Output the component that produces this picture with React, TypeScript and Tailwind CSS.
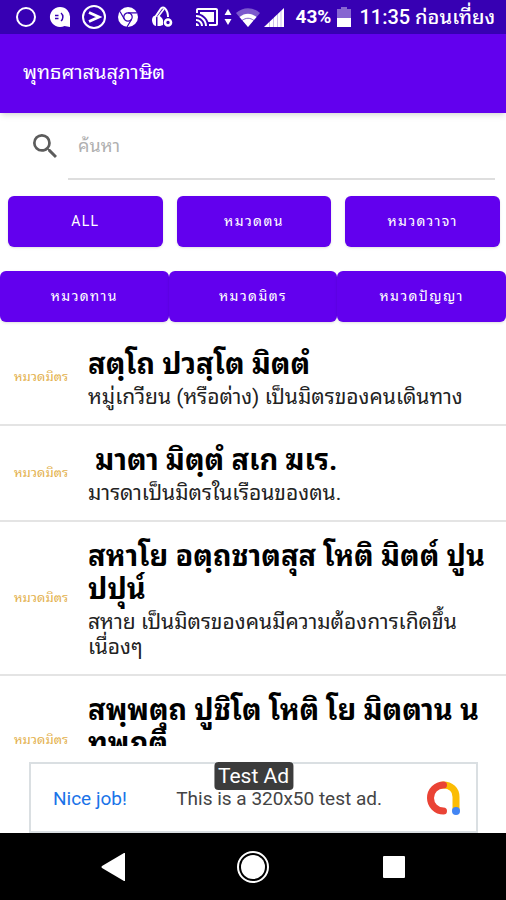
import * as React from "react";

interface Proverb {
  category: string;
  title: string;
  meaning: string;
}

const proverbs: Proverb[] = [
  {
    category: "หมวดมิตร",
    title: "สตฺโถ ปวสฺโต มิตตํ",
    meaning: "หมู่เกวียน (หรือต่าง) เป็นมิตรของคนเดินทาง",
  },
  {
    category: "หมวดมิตร",
    title: " มาตา มิตฺตํ สเก ฆเร.",
    meaning: "มารดาเป็นมิตรในเรือนของตน.",
  },
  {
    category: "หมวดมิตร",
    title: "สหาโย อตฺถชาตสุส โหติ มิตต์ ปูน\nปปุน์",
    meaning: "สหาย เป็นมิตรของคนมีความต้องการเกิดขึ้น\nเนื่องๆ",
  },
  {
    category: "หมวดมิตร",
    title: "สพฺพตุถ ปูชิโต โหติ โย มิตตาน น\nทุพภติ",
    meaning: "",
  },
];

function StatusBar() {
  return (
    <div className="flex h-[34px] shrink-0 items-center justify-between bg-[#3700b3] pl-3.5 pr-[11px] text-white">
      <div className="flex items-center gap-2.5">
        <svg className="size-6" viewBox="0 0 24 24" fill="none" stroke="currentColor" strokeWidth="2">
          <circle cx="12" cy="12" r="9" />
        </svg>
        <svg className="size-6" viewBox="-1 -1 24 24" fill="currentColor">
          <path d="M11 1a10 10 0 1 0 4.500 18.900L21 21v-9A10 10 0 0 0 11 1z" />
          <g fill="none" stroke="#3700b3" strokeWidth="1.500">
            <path d="M6 9.500h3.500M6 12.500h3.500M12 7c2.500 2 2.500 6 0 8" />
          </g>
        </svg>
        <svg className="size-6" viewBox="0 0 24 24" fill="none" stroke="currentColor">
          <circle cx="12" cy="12" r="11" strokeWidth="2" />
          <path d="M7 7.500l10 4.500-10 4.500" strokeWidth="2.800" />
        </svg>
        <svg className="size-6" viewBox="-1 -1 24 24">
          <circle cx="11" cy="11" r="10" fill="currentColor" />
          <g fill="none" stroke="#3700b3" strokeWidth="1.200">
            <circle cx="11" cy="11" r="4.200" />
            <path d="M11 6.800h9M7.400 13.200L3 5.500M14.600 13.200L10 21" />
          </g>
        </svg>
        <svg className="size-6" viewBox="-1 -1 24 24" fill="none" stroke="currentColor">
          <path d="M3.500 12L10 2.500q2-2 4 0 3 3 3 8.500" strokeWidth="2" />
          <path d="M7 11l6-8" strokeWidth="1.500" />
          <path d="M1 14c0-3 2-5 4-4v10c-2 0-4-3-4-6z" fill="currentColor" stroke="none" />
          <path d="M6.500 10c2-1 4 1 5.500 4v5c-2 1-4 1-5.500 1z" fill="currentColor" stroke="none" />
          <circle cx="17" cy="16.500" r="3" strokeWidth="2.600" />
        </svg>
      </div>
      <div className="flex items-center">
        <svg className="mr-1.5 h-[18px] w-[22px]" viewBox="1 3 22 18" fill="currentColor">
          <path d="M1 18v3h3c0-1.660-1.340-3-3-3zm0-4v2c2.760 0 5 2.240 5 5h2c0-3.870-3.130-7-7-7zm18-7H5v1.630c3.960 1.280 7.090 4.410 8.370 8.370H19V7zM1 10v2c4.970 0 9 4.030 9 9h2c0-6.080-4.930-11-11-11zm20-7H3c-1.100 0-2 .9-2 2v3h2V5h18v14h-7v2h7c1.100 0 2-.9 2-2V5c0-1.100-.9-2-2-2z" />
        </svg>
        <svg className="mr-1 h-4 w-2" viewBox="0 0 8 16" fill="currentColor">
          <path d="M4 0l3.500 6h-7zM4 16l3.500-6h-7z" />
        </svg>
        <svg className="mr-1 h-[19px] w-6" viewBox="0 0 24 19">
          <path d="M12 19L0 5C7-1.500 17-1.500 24 5z" fill="currentColor" opacity="0.35" />
          <path d="M12 19L3.500 9c5-4.500 12-4.500 17 0z" fill="currentColor" />
          <path d="M6 12.500c4-3 8-3 12 0" fill="none" stroke="#3700b3" strokeWidth="1" opacity="0.6" />
        </svg>
        <svg className="mr-3 h-[19px] w-5" viewBox="0 0 20 19">
          <path d="M20 0v19H0z" fill="currentColor" />
          <path d="M5.500 19v-6M9.500 19V9M13.500 19V5M17 19V2" stroke="#3700b3" strokeWidth="1" opacity="0.25" />
        </svg>
        <span className="mr-1.5 text-[19px] font-bold">43%</span>
        <svg className="mr-2 h-5 w-[14px]" viewBox="0 0 14 20" fill="currentColor">
          <path d="M4 0h6v2h4v9H0V2h4z" opacity="0.4" />
          <path d="M0 11h14v9H0z" />
        </svg>
        <span className="whitespace-nowrap text-[20px] font-medium leading-6">11:35 ก่อนเที่ยง</span>
      </div>
    </div>
  );
}

function SearchBox() {
  return (
    <div className="flex h-[67px] shrink-0 items-start pl-[33px] pr-[11px]">
      <label htmlFor="search" className="mr-[11px] mt-[21px]">
        <svg className="size-6" viewBox="3 3 17.500 17.500" fill="#5c5c5c">
          <path d="M15.500 14h-.79l-.28-.27A6.471 6.471 0 0 0 16 9.500 6.500 6.500 0 1 0 9.500 16c1.610 0 3.090-.59 4.230-1.570l.27.28v.79l5 4.990L20.490 19l-4.990-5zm-6 0C7.010 14 5 11.990 5 9.500S7.010 5 9.500 5 14 7.010 14 9.500 11.990 14 9.500 14z" />
        </svg>
      </label>
      <input
        id="search"
        type="search"
        aria-label="ค้นหา"
        placeholder="ค้นหา"
        className="h-[67px] min-w-0 flex-1 border-b-2 border-[#dedede] px-2.5 text-[18px] outline-none placeholder:text-[#b0b0b0]"
      />
    </div>
  );
}

function CategoryButton({ label }: { label: string }) {
  return (
    <button
      type="button"
      className="h-[51px] flex-1 rounded-md bg-[#6200ee] text-[14px] tracking-widest text-white shadow-sm"
    >
      {label}
    </button>
  );
}

function ProverbRow({ category, title, meaning }: Proverb) {
  return (
    <li className="flex items-center border-b-2 border-[#e4e4e4] pb-3.5 pl-3.5 pr-2 pt-[18px]">
      <span className="w-[74px] shrink-0 pb-1 text-[13px] text-[#e3b04b]">{category}</span>
      <div className="min-w-0 whitespace-pre text-black">
        <h2 className="text-[29px] font-bold leading-[33px]">{title}</h2>
        <p className="mt-1 min-h-[25px] text-[21px] leading-[25px] text-[#222]">{meaning}</p>
      </div>
    </li>
  );
}

function AdBanner() {
  return (
    <a
      href="#ad"
      className="relative ml-[29px] mr-7 mt-4 flex h-[71px] shrink-0 items-center border-2 border-[#dadfe2] bg-white pl-[22px] pr-4 pt-1"
    >
      <span className="mr-auto text-[19px] text-[#1a73e8]">Nice job!</span>
      <span className="mr-11 text-[19px] text-[#444]">This is a 320x50 test ad.</span>
      <svg className="mb-1 h-9 w-[34px]" viewBox="0 0 34 36" fill="none" strokeWidth="7" strokeLinecap="round">
        <path d="M17 5c8 0 13 5 13 12v13" stroke="#fbbc04" />
        <path d="M17.500 5A13 13 0 0 0 17.500 31" stroke="#ea4335" />
        <circle cx="30" cy="31" r="4" fill="#4285f4" />
      </svg>
      <span className="absolute -top-0.5 left-1/2 -translate-x-1/2 whitespace-nowrap rounded bg-[#3c3c3c] px-1 text-[21px] leading-7 text-white">
        Test Ad
      </span>
    </a>
  );
}

function NavigationBar() {
  return (
    <nav className="flex h-[67px] shrink-0 items-center justify-center gap-[112px] bg-black text-white">
      <button type="button" aria-label="Back">
        <svg className="h-7 w-[26px]" viewBox="-2 0 26 28" fill="currentColor">
          <path d="M24 .5v27q0 1-1 .5L1 15q-1-1 0-2L23 0q1-.5 1 .5z" />
        </svg>
      </button>
      <button type="button" aria-label="Home">
        <svg className="size-8" viewBox="0 0 32 32" fill="currentColor">
          <circle cx="16" cy="16" r="15" fill="none" stroke="currentColor" strokeWidth="2" />
          <circle cx="16" cy="16" r="12" />
        </svg>
      </button>
      <button type="button" aria-label="Recent apps">
        <svg className="size-[26px]" viewBox="0 0 26 26" fill="currentColor">
          <rect x="2" y="2" width="22" height="22" rx="1" />
        </svg>
      </button>
    </nav>
  );
}

export default function App() {
  return (
    <div className="flex h-screen flex-col overflow-hidden bg-white font-['Roboto','Noto_Sans_Thai_Looped','Noto_Looped_Thai','Droid_Sans_Thai','Loma','Noto_Sans',sans-serif]">
      <StatusBar />
      <header className="flex h-[79px] shrink-0 items-center bg-[#6200ee] px-[23px] pb-1 shadow-md">
        <h1 className="text-[20px] text-white">พุทธศาสนสุภาษิต</h1>
      </header>
      <SearchBox />
      <div className="mt-4 flex shrink-0 gap-3.5 pl-2 pr-1.5">
        <CategoryButton label="ALL" />
        <CategoryButton label="หมวดตน" />
        <CategoryButton label="หมวดวาจา" />
      </div>
      <div className="mt-6 flex shrink-0">
        <CategoryButton label="หมวดทาน" />
        <CategoryButton label="หมวดมิตร" />
        <CategoryButton label="หมวดปัญญา" />
      </div>
      <ul className="mt-2 min-h-0 flex-1 overflow-hidden">
        {proverbs.map((proverb, index) => (
          <ProverbRow key={index} {...proverb} />
        ))}
      </ul>
      <AdBanner />
      <NavigationBar />
    </div>
  );
}
